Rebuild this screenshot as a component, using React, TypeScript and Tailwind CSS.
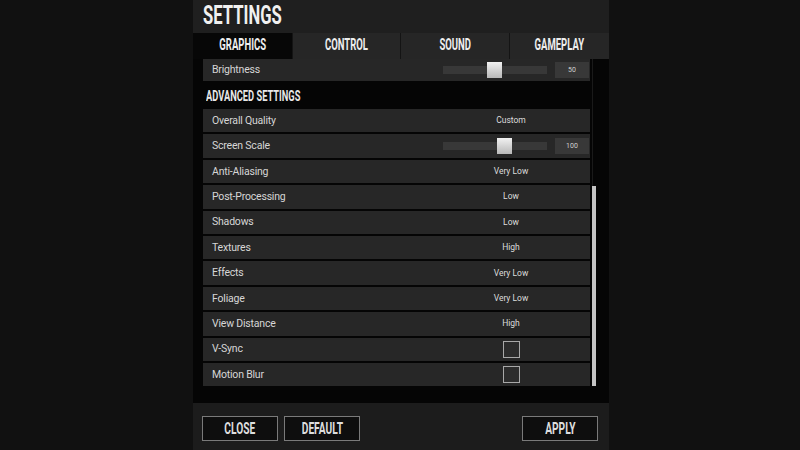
import React from 'react';

const body = { fontFamily: 'Roboto, "Liberation Sans", sans-serif' };
const display = { fontFamily: 'Roboto, "Liberation Sans", sans-serif' };

type Row =
  | { label: string; value: string }
  | { label: string; slider: number; num: string }
  | { label: string; check: true };

const rows: Row[] = [
  { label: 'Overall Quality', value: 'Custom' },
  { label: 'Screen Scale', slider: 54, num: '100' },
  { label: 'Anti-Aliasing', value: 'Very Low' },
  { label: 'Post-Processing', value: 'Low' },
  { label: 'Shadows', value: 'Low' },
  { label: 'Textures', value: 'High' },
  { label: 'Effects', value: 'Very Low' },
  { label: 'Foliage', value: 'Very Low' },
  { label: 'View Distance', value: 'High' },
  { label: 'V-Sync', check: true },
  { label: 'Motion Blur', check: true },
];

const tabs = [
  { name: 'GRAPHICS', w: 'w-[99px]', active: true },
  { name: 'CONTROL', w: 'w-[108px]', active: false },
  { name: 'SOUND', w: 'w-[109px]', active: false },
  { name: 'GAMEPLAY', w: 'w-[100px]', active: false },
];

function Slider({ pos, num }: { pos: number; num: string }) {
  return (
    <div className="flex items-center">
      <div className="relative w-[104px] h-[8px] bg-[#383838]">
        <div
          className="absolute top-[-4px] w-[15px] h-[16px] bg-gradient-to-b from-[#f2f2f2] to-[#b8b8b8]"
          style={{ left: pos }}
        />
      </div>
      <div className="ml-[8px] w-[34px] h-[16px] bg-[#383838] flex items-center justify-center text-[7px] text-[#d0d0d0]">
        {num}
      </div>
    </div>
  );
}

function Label({ text }: { text: string }) {
  return (
    <span className="pl-[9px] flex-1 text-[10.5px] tracking-[-0.2px] text-[#d6d6d6]">{text}</span>
  );
}

function SettingRow({ row }: { row: Row }) {
  return (
    <div className="h-[23.4px] w-[387px] bg-[#272727] flex items-center shrink-0">
      <Label text={row.label} />
      {'slider' in row ? (
        <div className="w-[147px]">
          <Slider pos={row.slider} num={row.num} />
        </div>
      ) : (
        <div className="w-[147px] pr-[11px] flex justify-center">
          {'check' in row ? (
            <div className="w-[17px] h-[17px] border-[1.5px] border-[#a8a8a8] bg-[#2c2c2c]" />
          ) : (
            <span className="text-[8.5px] text-[#dcdcdc]">{row.value}</span>
          )}
        </div>
      )}
    </div>
  );
}

function Button({ text }: { text: string }) {
  return (
    <div className="w-[76px] h-[25px] border-[1.5px] border-[#7a7a7a] bg-[#0e0e0e] flex items-center justify-center">
      <span
        className="inline-block scale-x-[0.6] font-bold text-[17px] text-[#dedede] leading-none"
        style={display}
      >
        {text}
      </span>
    </div>
  );
}

export default function App() {
  return (
    <div className="w-[800px] h-[450px] bg-[#111111] flex pl-[193px]" style={body}>
      <div className="w-[416px] h-full flex flex-col bg-[#1c1c1c]">
        {/* title */}
        <div className="h-[33px] bg-[#1f1f1f] flex items-center pl-[10px] pb-[3px]">
          <span
            className="inline-block origin-left scale-x-[0.64] font-bold text-[26px] text-[#f0f0f0] leading-none"
            style={display}
          >
            SETTINGS
          </span>
        </div>

        {/* tabs */}
        <div className="h-[26px] flex">
          {tabs.map((t) => (
            <div
              key={t.name}
              className={`${t.w} h-full flex items-center justify-center pb-[3px] ${
                t.active ? 'bg-[#070707]' : 'bg-[#262626] border-l border-[#141414]'
              }`}
            >
              <span
                className="inline-block scale-x-[0.56] font-bold text-[17px] text-[#eeeeee] leading-none"
                style={display}
              >
                {t.name}
              </span>
            </div>
          ))}
        </div>

        {/* content */}
        <div className="h-[344px] bg-[#050505] flex pl-[10px]">
          <div className="flex flex-col">
            <div className="h-[22px] w-[387px] bg-[#272727] flex items-center">
              <Label text="Brightness" />
              <div className="w-[147px]">
                <Slider pos={44} num="50" />
              </div>
            </div>
            <div className="h-[28px] flex items-center pl-[3px] pt-[3px]">
              <span
                className="inline-block origin-left scale-x-[0.6] font-bold text-[15.5px] text-[#e8e8e8] leading-none"
                style={display}
              >
                ADVANCED SETTINGS
              </span>
            </div>
            <div className="flex flex-col gap-[2px]">
              {rows.map((r) => (
                <SettingRow key={r.label} row={r} />
              ))}
            </div>
          </div>
          <div className="ml-[2px] w-[4px] flex flex-col">
            <div className="h-[127px] border-l border-[#1a1a1a]" />
            <div className="h-[200px] bg-[#c4c4c4]" />
          </div>
        </div>

        {/* footer */}
        <div className="flex-1 flex items-start pt-[13px] pl-[9px] pr-[11px]">
          <Button text="CLOSE" />
          <div className="ml-[6px]">
            <Button text="DEFAULT" />
          </div>
          <div className="ml-auto">
            <Button text="APPLY" />
          </div>
        </div>
      </div>
    </div>
  );
}
